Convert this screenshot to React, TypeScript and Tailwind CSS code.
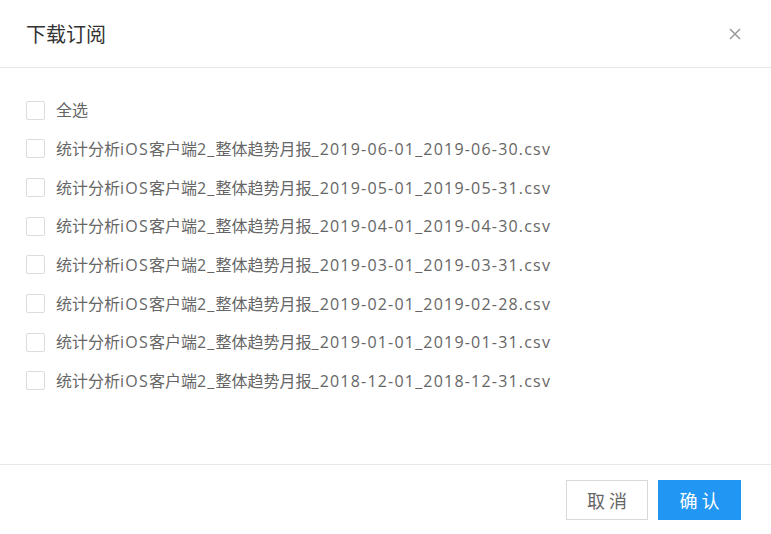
import { useState } from 'react';

const files = [
  '统计分析iOS客户端2_整体趋势月报_2019-06-01_2019-06-30.csv',
  '统计分析iOS客户端2_整体趋势月报_2019-05-01_2019-05-31.csv',
  '统计分析iOS客户端2_整体趋势月报_2019-04-01_2019-04-30.csv',
  '统计分析iOS客户端2_整体趋势月报_2019-03-01_2019-03-31.csv',
  '统计分析iOS客户端2_整体趋势月报_2019-02-01_2019-02-28.csv',
  '统计分析iOS客户端2_整体趋势月报_2019-01-01_2019-01-31.csv',
  '统计分析iOS客户端2_整体趋势月报_2018-12-01_2018-12-31.csv',
];

// split a label into CJK and Latin runs so the Latin part can be spaced a bit wider
function runs(text: string) {
  return text.match(/[\u4e00-\u9fff]+|[^\u4e00-\u9fff]+/g) ?? [];
}

function Row({ label, checked, onToggle }: { label: string; checked: boolean; onToggle: () => void }) {
  return (
    <label className="flex items-center h-[38.65px] cursor-pointer">
      <span
        onClick={onToggle}
        className={`w-[19px] h-[19px] rounded-[2px] border shrink-0 flex items-center justify-center ${
          checked ? 'bg-[#2196f3] border-[#2196f3]' : 'bg-white border-[#dcdcdc]'
        }`}
      >
        {checked && (
          <svg width="11" height="9" viewBox="0 0 11 9" fill="none">
            <path d="M1 4.5 4 7.5 10 1.5" stroke="white" strokeWidth="1.6" />
          </svg>
        )}
      </span>
      <span
        className="ml-[11px] text-[16px] text-[#666] leading-none whitespace-nowrap"
        style={{ fontFamily: '"Open Sans", "Noto Sans CJK SC", sans-serif' }}
      >
        {runs(label).map((r, i) =>
          /[\u4e00-\u9fff]/.test(r) ? (
            <span key={i}>{r}</span>
          ) : (
            <span key={i} className="tracking-[1.2px]">
              {r}
            </span>
          )
        )}
      </span>
    </label>
  );
}

export default function App() {
  const [selected, setSelected] = useState<boolean[]>(files.map(() => false));
  const all = selected.every(Boolean);

  return (
    <div
      className="w-[771px] h-[534px] bg-white flex flex-col"
      style={{ fontFamily: '"Noto Sans CJK SC", "Noto Sans", sans-serif' }}
    >
      {/* Header */}
      <div className="h-[68px] border-b border-[#e8e8e8] flex items-center justify-between pl-[26px] pr-[29px]">
        <h2 className="text-[20px] text-[#333] font-normal">下载订阅</h2>
        <button className="w-[14px] h-[14px] flex items-center justify-center">
          <svg width="12" height="12" viewBox="0 0 12 12">
            <path d="M1 1 11 11 M11 1 1 11" stroke="#999" strokeWidth="1.5" />
          </svg>
        </button>
      </div>

      {/* Body */}
      <div className="h-[397px] pt-[23px] px-[26px] border-b border-[#e8e8e8]">
        <Row
          label="全选"
          checked={all}
          onToggle={() => setSelected(files.map(() => !all))}
        />
        {files.map((f, i) => (
          <Row
            key={f}
            label={f}
            checked={selected[i]}
            onToggle={() => setSelected(selected.map((s, j) => (j === i ? !s : s)))}
          />
        ))}
      </div>

      {/* Footer */}
      <div className="flex-1 flex justify-end items-start pt-[15px] pr-[30px] gap-[10px]">
        <button className="w-[82px] h-[40px] border border-[#d9d9d9] bg-white text-[18px] text-[#666] tracking-[4px] indent-[4px]">
          取消
        </button>
        <button className="w-[83px] h-[40px] bg-[#2196f3] text-[18px] text-white tracking-[4px] indent-[4px]">
          确认
        </button>
      </div>
    </div>
  );
}
